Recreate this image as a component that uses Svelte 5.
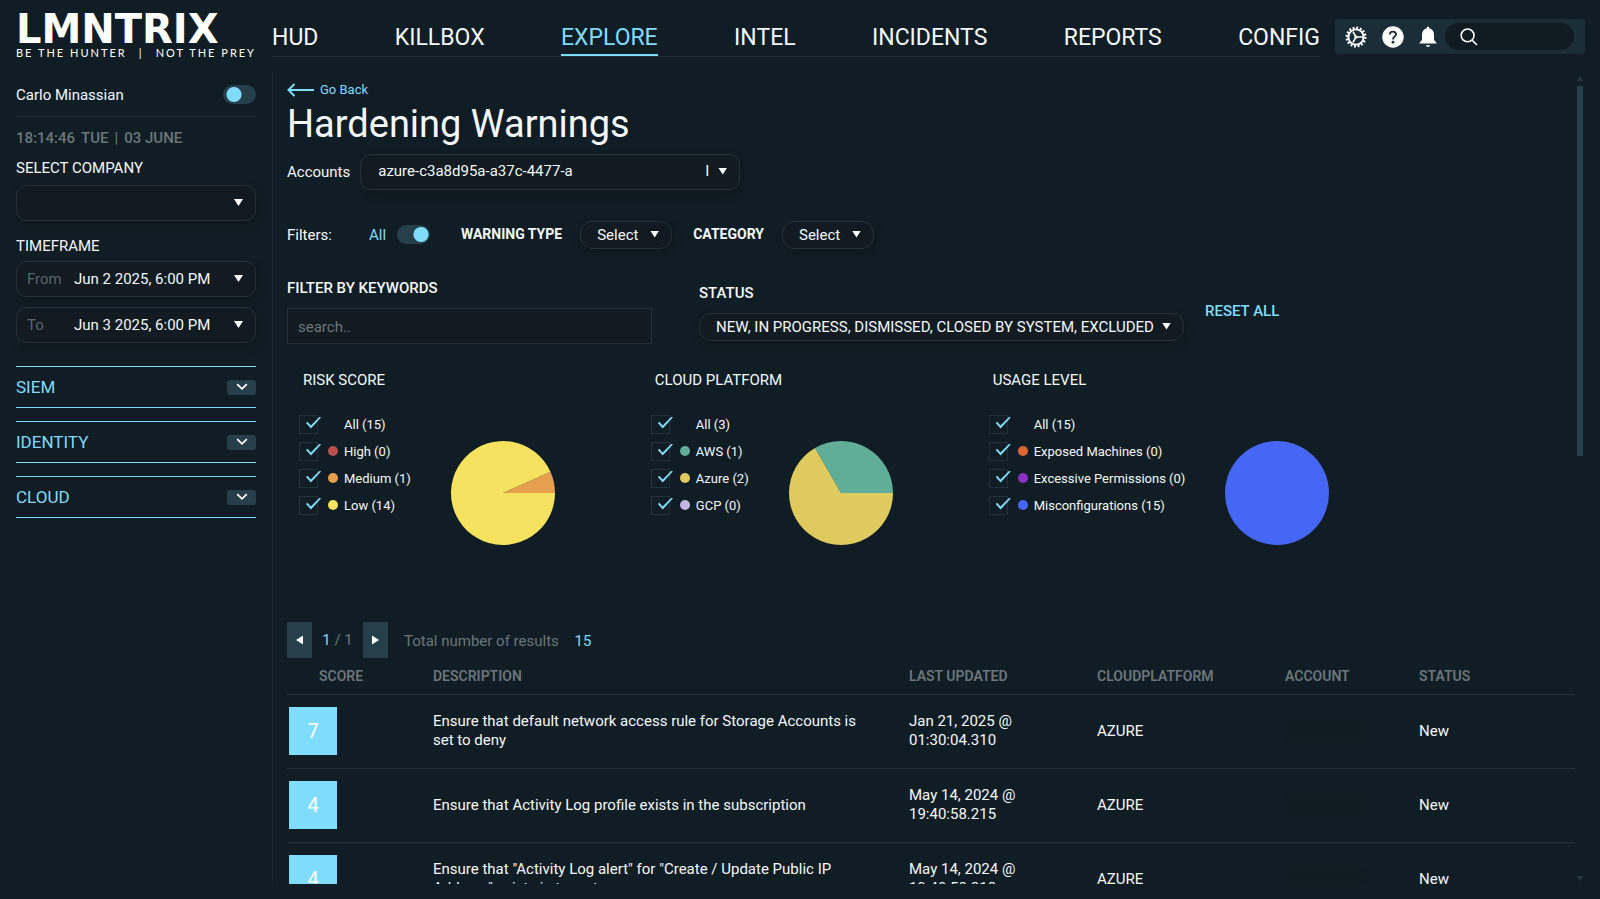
<script>
  const navItems = ['HUD', 'KILLBOX', 'EXPLORE', 'INTEL', 'INCIDENTS', 'REPORTS', 'CONFIG']
  const sections = ['SIEM', 'IDENTITY', 'CLOUD']

  const charts = [
    {
      id: 'risk',
      title: 'RISK SCORE',
      items: [
        { label: 'All', count: 15 },
        { label: 'High', count: 0, color: '#b94e50' },
        { label: 'Medium', count: 1, color: '#e69e4f' },
        { label: 'Low', count: 14, color: '#f5e35f' },
      ],
    },
    {
      id: 'platform',
      title: 'CLOUD PLATFORM',
      items: [
        { label: 'All', count: 3 },
        { label: 'AWS', count: 1, color: '#60ae97' },
        { label: 'Azure', count: 2, color: '#dfca5f' },
        { label: 'GCP', count: 0, color: '#c3b7e2' },
      ],
    },
    {
      id: 'usage',
      title: 'USAGE LEVEL',
      items: [
        { label: 'All', count: 15 },
        { label: 'Exposed Machines', count: 0, color: '#dc6735' },
        { label: 'Excessive Permissions', count: 0, color: '#8a32c4' },
        { label: 'Misconfigurations', count: 15, color: '#4667f5' },
      ],
    },
  ]

  const rows = [
    { score: 7, description: 'Ensure that default network access rule for Storage Accounts is set to deny', updated: 'Jan 21, 2025 @ 01:30:04.310' },
    { score: 4, description: 'Ensure that Activity Log profile exists in the subscription', updated: 'May 14, 2024 @ 19:40:58.215' },
    { score: 4, description: 'Ensure that "Activity Log alert" for "Create / Update Public IP Address" exists in tenant', updated: 'May 14, 2024 @ 19:40:58.218' },
  ]

  let activeNav = $state('EXPLORE')
  let darkMode = $state(false)
  let allFilters = $state(true)
  let keywords = $state('')

  // Slices run counter-clockwise from three o'clock
  function slices(items) {
    const parts = items.filter((i) => i.color && i.count > 0)
    const total = parts.reduce((sum, i) => sum + i.count, 0)
    let angle = 0
    return parts.map((i) => {
      const next = angle + (i.count / total) * Math.PI * 2
      const full = i.count === total
      const large = next - angle > Math.PI ? 1 : 0
      const x1 = 52 + 52 * Math.cos(angle)
      const y1 = 52 - 52 * Math.sin(angle)
      const x2 = 52 + 52 * Math.cos(next)
      const y2 = 52 - 52 * Math.sin(next)
      angle = next
      return { color: i.color, full, d: `M52 52 L${x1} ${y1} A52 52 0 ${large} 0 ${x2} ${y2} Z` }
    })
  }
</script>

<div class="app">
  <header class="topbar">
    <a class="logo" href="#home" aria-label="LMNTRIX home">
      <span class="logo__name">LMNTRIX</span>
      <span class="logo__tag"><span>BE THE HUNTER</span><span>|</span><span>NOT THE PREY</span></span>
    </a>
    <nav class="nav">
      {#each navItems as item}
        <a href="#{item.toLowerCase()}" class:active={item === activeNav} onclick={() => (activeNav = item)}>{item}</a>
      {/each}
    </nav>
    <div class="tools">
      <button class="tool" aria-label="Settings">
        <svg width="22" height="22" viewBox="0 0 22 22" fill="none" stroke="#fff">
          <circle cx="11" cy="11" r="9.3" stroke-width="2.4" stroke-dasharray="1.9 1.75" />
          <circle cx="11" cy="11" r="7.6" stroke-width="1.9" />
          <path d="M11 11 L8 5.6 M11 11 L8 16.4 M11 11 H18" stroke-width="1.6" />
          <circle cx="11" cy="11" r="1.6" fill="#fff" stroke="none" />
        </svg>
      </button>
      <button class="tool" aria-label="Help">
        <svg width="22" height="22" viewBox="0 0 22 22">
          <circle cx="11" cy="11" r="10.7" fill="#fff" />
          <path d="M8 8.6 V8 Q8 5.6 11 5.6 T14 8.2 Q14 9.6 12.4 10.7 Q11 11.7 11 13.4" fill="none" stroke="#1b2d37" stroke-width="1.9" />
          <circle cx="11" cy="16.2" r="1.4" fill="#1b2d37" />
        </svg>
      </button>
      <button class="tool" aria-label="Notifications">
        <svg width="18" height="22" viewBox="0 0 18 22" fill="#fff">
          <path d="M9 0.5 q1.4 0 1.4 1.8 Q15 3.6 15 9 V14 L17.4 16.4 V17.6 H0.6 V16.4 L3 14 V9 Q3 3.6 7.6 2.3 Q7.6 .5 9 .5 Z" />
          <path d="M6.8 19.2 H11.2 Q10.8 21 9 21 T6.8 19.2 Z" />
        </svg>
      </button>
      <label class="search">
        <svg width="18" height="18" viewBox="0 0 18 18" fill="none" stroke="#fff" stroke-width="1.6">
          <circle cx="7.6" cy="7.4" r="6.4" />
          <path d="M12.2 12.2 L17 17" />
        </svg>
        <input type="text" aria-label="Search" />
      </label>
    </div>
  </header>

  <div class="body">
    <aside class="sidebar">
      <div class="user">
        <span>Carlo Minassian</span>
        <input class="switch" type="checkbox" aria-label="Theme" bind:checked={darkMode} />
      </div>
      <div class="clock"><span>18:14:46</span><span>TUE</span><span>|</span><span>03 JUNE</span></div>

      <label class="side-label" for="company">SELECT COMPANY</label>
      <div class="field">
        <select id="company"><option></option></select>
      </div>

      <div class="side-label side-label--time">TIMEFRAME</div>
      <div class="dates">
        <div class="field">
          <label for="from">From</label>
          <select id="from"><option>Jun 2 2025, 6:00 PM</option></select>
        </div>
        <div class="field">
          <label for="to">To</label>
          <select id="to"><option>Jun 3 2025, 6:00 PM</option></select>
        </div>
      </div>

      <div class="sections">
        {#each sections as section}
          <button class="section">
            <span>{section}</span>
            <span class="section__toggle">
              <svg width="12" height="8" viewBox="0 0 12 8" fill="none" stroke="#fff" stroke-width="1.8"><path d="M1.2 1.2 L6 5.8 L10.8 1.2" /></svg>
            </span>
          </button>
        {/each}
      </div>
    </aside>

    <main class="content">
      <a class="back" href="#back">
        <svg width="27" height="14" viewBox="0 0 27 14" fill="none" stroke="currentColor" stroke-width="2"><path d="M27 7 H1.5 M7.5 1 L1.5 7 L7.5 13" /></svg>
        Go Back
      </a>
      <h1>Hardening Warnings</h1>

      <div class="accounts">
        <label for="account">Accounts</label>
        <div class="field field--account">
          <select id="account"><option>azure-c3a8d95a-a37c-4477-a</option></select>
          <span class="field__rest">I</span>
        </div>
      </div>

      <div class="filters">
        <span class="filters__title">Filters:</span>
        <label class="filters__all" for="all-filters">All</label>
        <input id="all-filters" class="switch" type="checkbox" bind:checked={allFilters} />
        <label class="filters__type" for="type">WARNING TYPE</label>
        <div class="pill"><select id="type"><option>Select</option></select></div>
        <label class="filters__category" for="category">CATEGORY</label>
        <div class="pill"><select id="category"><option>Select</option></select></div>
      </div>

      <div class="query">
        <div class="query__keywords">
          <label class="strong" for="keywords">FILTER BY KEYWORDS</label>
          <input id="keywords" type="text" placeholder="search.." bind:value={keywords} />
        </div>
        <div class="query__status">
          <label class="strong" for="status">STATUS</label>
          <div class="pill pill--status">
            <select id="status"><option>NEW, IN PROGRESS, DISMISSED, CLOSED BY SYSTEM, EXCLUDED</option></select>
          </div>
        </div>
        <button class="reset">RESET ALL</button>
      </div>

      <div class="charts">
        {#each charts as chart}
          <section class="chart">
            <h2>{chart.title}</h2>
            <div class="chart__body">
              <ul>
                {#each chart.items as item}
                  <li>
                    <label>
                      <input type="checkbox" checked />
                      <span class="dot" style="background: {item.color ?? 'transparent'}"></span>
                      {item.label} ({item.count})
                    </label>
                  </li>
                {/each}
              </ul>
              <svg class="pie" width="104" height="104" viewBox="0 0 104 104">
                {#each slices(chart.items) as slice}
                  {#if slice.full}
                    <circle cx="52" cy="52" r="52" fill={slice.color} />
                  {:else}
                    <path d={slice.d} fill={slice.color} />
                  {/if}
                {/each}
              </svg>
            </div>
          </section>
        {/each}
      </div>

      <div class="pager">
        <button aria-label="Previous page"><svg width="7" height="10" viewBox="0 0 7 10" fill="#fff"><path d="M7 0.5 V9.5 L0 5 Z" /></svg></button>
        <span class="pager__pages"><b>1</b> / 1</span>
        <button aria-label="Next page"><svg width="7" height="10" viewBox="0 0 7 10" fill="#fff"><path d="M0 0.5 V9.5 L7 5 Z" /></svg></button>
        <span class="pager__total">Total number of results <b>15</b></span>
      </div>

      <table>
        <thead>
          <tr>
            <th class="col-score">SCORE</th>
            <th class="col-desc">DESCRIPTION</th>
            <th class="col-updated">LAST UPDATED</th>
            <th class="col-platform">CLOUDPLATFORM</th>
            <th class="col-account">ACCOUNT</th>
            <th class="col-status">STATUS</th>
          </tr>
        </thead>
        <tbody>
          {#each rows as row}
            <tr>
              <td><span class="score">{row.score}</span></td>
              <td class="desc">{row.description}</td>
              <td class="updated">{row.updated}</td>
              <td>AZURE</td>
              <td><span class="masked"></span></td>
              <td>New</td>
            </tr>
          {/each}
        </tbody>
      </table>
    </main>

    <div class="scrollbar" aria-hidden="true">
      <span class="scrollbar__up"></span>
      <span class="scrollbar__thumb"></span>
      <span class="scrollbar__down"></span>
    </div>
  </div>
</div>

<style>
  :global(body) {
    background: #111d24;
  }

  .app {
    --cyan: #80dcfb;
    --line: #23313a;
    --muted: #6b757b;
    --teal: #263f4a;
    --arrow: polygon(0 0, 100% 0, 50% 100%);
    display: flex;
    flex-direction: column;
    height: 100vh;
    box-sizing: border-box;
    padding-bottom: 15px;
    overflow: hidden;
    color: #f4f8fa;
    font-family: Roboto, "Liberation Sans", sans-serif;
    font-size: 15px;
    line-height: 19px;
  }

  .app :global(*) {
    box-sizing: border-box;
  }

  a {
    color: inherit;
    text-decoration: none;
  }

  button,
  input,
  select {
    margin: 0;
    padding: 0;
    border: 0;
    background: none;
    color: inherit;
    font: inherit;
  }

  button {
    cursor: pointer;
  }

  /* Header */

  .topbar {
    display: flex;
    flex: none;
    height: 72px;
    padding: 0 15px 0 16px;
  }

  .logo {
    display: flex;
    flex-direction: column;
    width: 240px;
    margin-right: 16px;
    padding-top: 12px;
    color: #fff;
  }

  .logo__name {
    font: bold 40px/34px "DejaVu Sans", sans-serif;
  }

  .logo__tag {
    display: flex;
    justify-content: space-between;
    font: 11px/14px Lato, sans-serif;
    letter-spacing: 2px;
  }

  .nav {
    display: flex;
    flex: 1;
    justify-content: space-between;
    height: 57px;
    border-bottom: 1px solid var(--line);
    font-size: 23px;
    line-height: 28px;
  }

  .nav a {
    padding-top: 24px;
    border-bottom: 2px solid transparent;
  }

  .nav .active {
    border-color: var(--cyan);
    color: var(--cyan);
  }

  .tools {
    display: flex;
    align-items: center;
    gap: 15px;
    width: 250px;
    height: 35px;
    margin: 19px 0 0 15px;
    padding: 0 11px 0 10px;
    border-radius: 3px;
    background: #1b2d37;
  }

  .tool {
    display: flex;
  }

  .search {
    display: flex;
    flex: 1;
    align-items: center;
    gap: 8px;
    min-width: 0;
    height: 27px;
    margin-left: -7px;
    padding: 0 15px;
    border-radius: 14px;
    background: #111b22;
  }

  .search svg {
    flex: none;
  }

  .search input {
    width: 100%;
    min-width: 0;
    outline: 0;
  }

  .body {
    display: flex;
    flex: 1;
    min-height: 0;
  }

  /* Sidebar */

  .sidebar {
    flex: none;
    width: 273px;
    padding: 13px 16px 0;
    border-right: 1px solid #18252d;
  }

  .user {
    display: flex;
    align-items: flex-start;
    justify-content: space-between;
    height: 32px;
    border-bottom: 1px solid var(--line);
    line-height: 21px;
  }

  .switch {
    width: 33px;
    height: 19px;
    border-radius: 10px;
    background: radial-gradient(circle at 11px 50%, var(--cyan) 7px, transparent 8px) var(--teal);
    appearance: none;
    cursor: pointer;
  }

  .switch:checked {
    background: radial-gradient(circle at 24px 50%, var(--cyan) 7px, transparent 8px) var(--teal);
  }

  .clock {
    display: flex;
    gap: 6px;
    margin: 12px 0 11px;
    color: var(--muted);
    font-weight: 500;
  }

  .side-label {
    display: block;
    margin-bottom: 7px;
  }

  .side-label--time {
    margin: 16px 0 5px;
  }

  .field {
    display: flex;
    position: relative;
    align-items: center;
    height: 36px;
    border: 1px solid var(--line);
    border-radius: 10px;
    background: #111b21;
    box-shadow: 2px 4px 6px #0f181e;
  }

  .field::after,
  .pill::after {
    position: absolute;
    top: 50%;
    right: 12px;
    width: 9px;
    height: 7px;
    margin-top: -4px;
    background: #fff;
    clip-path: var(--arrow);
    content: '';
    pointer-events: none;
  }

  .field label {
    flex: none;
    width: 57px;
    padding-left: 10px;
    color: #59646a;
  }

  select {
    appearance: none;
    cursor: pointer;
  }

  .field select {
    width: 100%;
    height: 100%;
  }

  .dates {
    display: grid;
    gap: 10px;
  }

  .sections {
    display: grid;
    gap: 13px;
    margin-top: 23px;
  }

  .section {
    display: flex;
    align-items: center;
    justify-content: space-between;
    height: 42px;
    border: solid var(--cyan);
    border-width: 1px 0;
    color: var(--cyan);
    font-size: 17px;
  }

  .section__toggle {
    display: flex;
    align-items: center;
    justify-content: center;
    width: 29px;
    height: 15px;
    border-radius: 3px;
    background: var(--teal);
  }

  /* Main column */

  .content {
    flex: 1;
    min-width: 0;
    padding: 8px 0 0 14px;
    overflow: hidden;
  }

  .back {
    display: inline-flex;
    align-items: center;
    gap: 6px;
    color: var(--cyan);
    font-size: 13px;
  }

  h1 {
    margin: 0;
    font-size: 38px;
    font-weight: 400;
    line-height: 44px;
  }

  .accounts {
    display: flex;
    align-items: center;
    gap: 10px;
    margin-top: 8px;
  }

  .accounts label,
  .filters__title,
  .filters__all {
    padding-top: 2px;
  }

  .field--account {
    width: 380px;
    padding-left: 17px;
  }

  .field--account select {
    width: 198px;
  }

  .field__rest {
    margin-left: auto;
    padding-right: 30px;
  }

  .strong {
    font-weight: 500;
  }

  .filters {
    display: flex;
    align-items: center;
    margin-top: 31px;
  }

  .filters__title {
    width: 82px;
  }

  .filters__all {
    width: 28px;
    color: var(--cyan);
  }

  .filters__type,
  .filters__category {
    font-size: 14px;
    font-weight: 700;
  }

  .filters__type {
    margin: 0 18px 0 31px;
  }

  .filters__category {
    margin: 0 18px 0 21px;
  }

  .pill {
    position: relative;
    width: 92px;
    height: 28px;
    border: 1px solid var(--line);
    border-radius: 12px;
    background: #111b21;
    box-shadow: 2px 4px 6px #0f181e;
  }

  .pill select {
    width: 100%;
    height: 100%;
    padding: 2px 0 0 16px;
  }

  .pill--status {
    width: 485px;
  }

  .query {
    display: flex;
    align-items: flex-start;
    margin-top: 30px;
  }

  .query__keywords {
    display: grid;
    gap: 10px;
    width: 365px;
  }

  .query__keywords input {
    height: 36px;
    padding: 2px 10px 0;
    border: 1px solid var(--line);
    background: #111b21;
    outline: 0;
  }

  .query__keywords input::placeholder {
    color: #6b757b;
    opacity: 1;
  }

  .query__status {
    display: grid;
    gap: 10px;
    margin: 5px 21px 0 47px;
  }

  .reset {
    margin-top: 23px;
    color: var(--cyan);
    font-weight: 500;
  }

  .charts {
    display: flex;
    gap: 96px;
    height: 251px;
    margin-top: 27px;
    padding-left: 12px;
  }

  h2 {
    margin: 0 0 25px 4px;
    font-size: 15px;
    font-weight: 400;
    line-height: 19px;
  }

  .chart__body {
    display: flex;
    gap: 40px;
  }

  ul {
    margin: 0;
    padding: 0;
    list-style: none;
    font-size: 13px;
  }

  li {
    height: 27px;
  }

  li label {
    display: flex;
    align-items: center;
    white-space: nowrap;
  }

  li input {
    position: relative;
    width: 19px;
    height: 19px;
    border: 1px solid var(--line);
    appearance: none;
  }

  li input:checked::after {
    position: absolute;
    top: 1px;
    left: 6px;
    width: 15px;
    height: 12px;
    background: var(--cyan);
    clip-path: polygon(0 55%, 10% 43%, 32% 75%, 92% 0, 100% 9%, 33% 100%);
    content: '';
  }

  .dot {
    width: 10px;
    height: 10px;
    margin: 0 6px 0 10px;
    border-radius: 50%;
  }

  .pie {
    margin-top: 26px;
  }

  .pager {
    display: flex;
    align-items: center;
    height: 36px;
    color: var(--muted);
  }

  .pager button {
    display: flex;
    align-items: center;
    justify-content: center;
    width: 25px;
    height: 36px;
    background: var(--teal);
  }

  .pager b {
    color: var(--cyan);
    font-weight: 400;
  }

  .pager__pages {
    width: 51px;
    padding-top: 2px;
    text-align: center;
  }

  .pager__total {
    padding: 4px 0 0 16px;
  }

  .pager__total b {
    margin-left: 12px;
  }

  table {
    width: 100%;
    border-collapse: collapse;
    table-layout: fixed;
  }

  th {
    height: 37px;
    padding: 1px 0 0;
    border-bottom: 1px solid var(--line);
    color: var(--muted);
    font-size: 14px;
    font-weight: 600;
    text-align: left;
  }

  td {
    height: 74px;
    padding: 0 0 1px;
    border-bottom: 1px solid var(--line);
  }

  .col-score {
    width: 146px;
    padding-left: 32px;
  }

  .col-desc {
    width: 476px;
  }

  .col-updated {
    width: 188px;
  }

  .col-platform {
    width: 188px;
  }

  .col-account {
    width: 134px;
  }

  .desc {
    padding-right: 40px;
  }

  .updated {
    padding-right: 70px;
  }

  .score {
    display: flex;
    align-items: center;
    justify-content: center;
    width: 48px;
    height: 48px;
    margin-left: 2px;
    background: var(--cyan);
    color: #fff;
    font-size: 20px;
  }

  .masked {
    display: block;
    width: 80px;
    height: 22px;
    background: #111b22;
  }

  .scrollbar {
    display: flex;
    flex: none;
    flex-direction: column;
    align-items: center;
    width: 10px;
    margin-right: 15px;
    padding: 4px 0 3px;
  }

  .scrollbar__up,
  .scrollbar__down {
    width: 7px;
    height: 5px;
    background: #273841;
    clip-path: polygon(50% 0, 100% 100%, 0 100%);
  }

  .scrollbar__down {
    margin-top: auto;
    clip-path: var(--arrow);
  }

  .scrollbar__thumb {
    width: 6px;
    height: 46%;
    margin-top: 5px;
    background: var(--teal);
  }
</style>
